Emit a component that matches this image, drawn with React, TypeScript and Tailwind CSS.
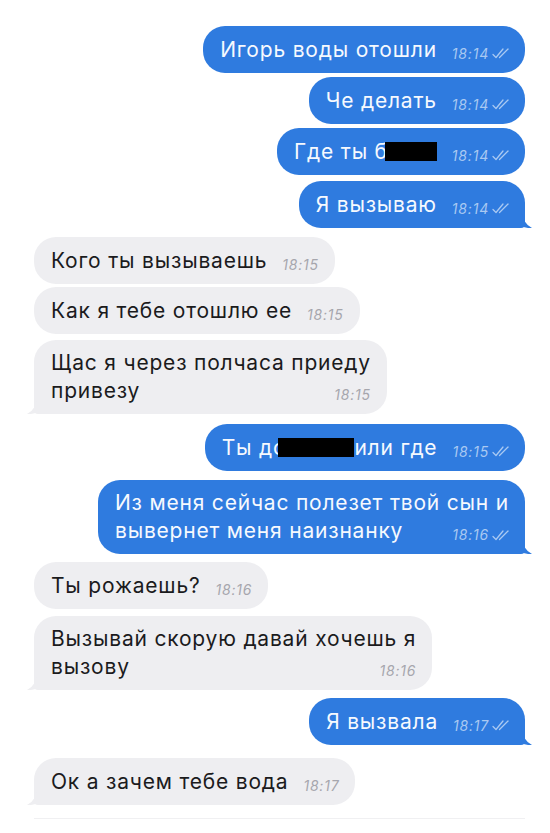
import React from 'react';

type Msg = {
  out: boolean;
  lines: React.ReactNode[];
  time: string;
  mt: string;
  tail?: boolean;
};

const Redact = ({ w, ml }: { w: string; ml: string }) => (
  <span className={`inline-block h-[19px] bg-black align-[-2px] ${w} ${ml}`} />
);

const messages: Msg[] = [
  { out: true, lines: ['Игорь воды отошли'], time: '18:14', mt: 'mt-[26px]' },
  { out: true, lines: ['Че делать'], time: '18:14', mt: 'mt-[4px]' },
  {
    out: true,
    lines: [
      <>
        Где ты б<Redact w="w-[52px]" ml="-ml-[3px]" />
      </>,
    ],
    time: '18:14',
    mt: 'mt-[4px]',
  },
  { out: true, lines: ['Я вызываю'], time: '18:14', mt: 'mt-[6px]', tail: true },
  { out: false, lines: ['Кого ты вызываешь'], time: '18:15', mt: 'mt-[9px]' },
  { out: false, lines: ['Как я тебе отошлю ее'], time: '18:15', mt: 'mt-[3px]' },
  {
    out: false,
    lines: ['Щас я через полчаса приеду', 'привезу'],
    time: '18:15',
    mt: 'mt-[6px]',
    tail: true,
  },
  {
    out: true,
    lines: [
      <>
        Ты до<Redact w="w-[76px]" ml="-ml-[8px]" />
        или где
      </>,
    ],
    time: '18:15',
    mt: 'mt-[10px]',
  },
  {
    out: true,
    lines: ['Из меня сейчас полезет твой сын и', 'вывернет меня наизнанку'],
    time: '18:16',
    mt: 'mt-[9px]',
    tail: true,
  },
  { out: false, lines: ['Ты рожаешь?'], time: '18:16', mt: 'mt-[8px]' },
  {
    out: false,
    lines: ['Вызывай скорую давай хочешь я', 'вызову'],
    time: '18:16',
    mt: 'mt-[7px]',
    tail: true,
  },
  { out: true, lines: ['Я вызвала'], time: '18:17', mt: 'mt-[8px]', tail: true },
  { out: false, lines: ['Ок а зачем тебе вода'], time: '18:17', mt: 'mt-[13px]', tail: true },
];

// двойная галочка
const Checks = () => (
  <svg width="17" height="11" viewBox="0 0 17 11" className="ml-[3px]" fill="none">
    <path d="M1 6.5 L4 9.5 L11 1" stroke="#a9c9f2" strokeWidth="1.3" strokeLinecap="round" strokeLinejoin="round" />
    <path d="M7.5 9.5 L16 1" stroke="#a9c9f2" strokeWidth="1.3" strokeLinecap="round" />
  </svg>
);

const Time = ({ out, time }: { out: boolean; time: string }) => (
  <span
    className={`flex shrink-0 items-center pl-[15px] text-[14px] italic leading-none tracking-[0.8px] ${
      out ? 'text-[#a9c9f2]' : 'text-[#a6a6ad]'
    } translate-y-[4px]`}
  >
    {time}
    {out && <Checks />}
  </span>
);

const Tail = ({ out }: { out: boolean }) =>
  out ? (
    <svg width="12" height="20" viewBox="0 0 12 20" className="absolute bottom-0 right-[-8px]">
      <path d="M0 0 Q1 15 11 20 Q5 20.5 0 18 Z" fill="#2f7bdf" />
    </svg>
  ) : (
    <svg width="12" height="20" viewBox="0 0 12 20" className="absolute bottom-0 left-[-8px]">
      <path d="M12 0 Q11 15 1 20 Q7 20.5 12 18 Z" fill="#eeeef1" />
    </svg>
  );

function Bubble({ m }: { m: Msg }) {
  const multi = m.lines.length > 1;
  const color = m.out ? 'bg-[#2f7bdf] text-[#f6f9fe]' : 'bg-[#eeeef1] text-[#1b1b1d]';
  const corner = m.tail ? (m.out ? 'rounded-br-[4px]' : 'rounded-bl-[4px]') : '';
  return (
    <div className={`flex ${m.out ? 'justify-end' : 'justify-start'} ${m.mt}`}>
      <div
        className={`relative rounded-[22px] ${corner} ${color} ${
          multi ? 'py-[9px]' : 'flex h-[47px] items-center'
        } pl-[17px] pr-[16px] text-[21px] leading-[28px]`}
      >
        {multi ? (
          <>
            <div className="tracking-[0.8px]">{m.lines[0]}</div>
            <div className="flex items-center justify-between">
              <span className="tracking-[0.8px]">{m.lines[1]}</span>
              <Time out={m.out} time={m.time} />
            </div>
          </>
        ) : (
          <div className="flex items-center">
            <span className="whitespace-nowrap tracking-[0.8px]">{m.lines[0]}</span>
            <Time out={m.out} time={m.time} />
          </div>
        )}
        {m.tail && <Tail out={m.out} />}
      </div>
    </div>
  );
}

export default function App() {
  return (
    <div
      className="relative h-[833px] w-[550px] overflow-hidden bg-white pl-[34px] pr-[25px]"
      style={{ fontFamily: 'Inter, "Liberation Sans", Arial, sans-serif' }}
    >
      {messages.map((m, i) => (
        <Bubble key={i} m={m} />
      ))}
      <div className="mt-[13px] h-px bg-[#f0f0f2]" />
    </div>
  );
}
